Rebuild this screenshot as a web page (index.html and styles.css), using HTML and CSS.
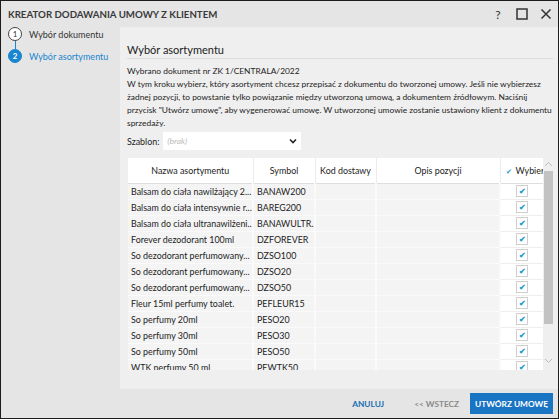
FILE: index.html
```html
<!DOCTYPE html>
<html lang="pl">
<head>
    <meta charset="UTF-8">
    <title>Kreator dodawania umowy z klientem</title>
    <link rel="stylesheet" href="styles.css">
</head>
<body>
<div class="window">
    <div class="titlebar">
        <span class="title">KREATOR DODAWANIA UMOWY Z KLIENTEM</span>
        <div class="win-buttons">
            <span class="win-btn">?</span>
            <span class="win-btn">
                <svg width="12" height="12" viewBox="0 0 12 12"><rect x="1" y="1" width="10" height="10" fill="none" stroke="#333" stroke-width="1.5"/></svg>
            </span>
            <span class="win-btn">
                <svg width="12" height="12" viewBox="0 0 12 12"><path d="M1.5 1.5 L10.5 10.5 M10.5 1.5 L1.5 10.5" stroke="#333" stroke-width="1.5"/></svg>
            </span>
        </div>
    </div>

    <div class="main">
        <div class="sidebar">
            <div class="step">
                <span class="step-num">1</span>
                <span class="step-label">Wybór dokumentu</span>
            </div>
            <div class="step-line"></div>
            <div class="step active">
                <span class="step-num">2</span>
                <span class="step-label">Wybór asortymentu</span>
            </div>
        </div>

        <div class="content">
            <h1 class="heading">Wybór asortymentu</h1>
            <p class="info">Wybrano dokument nr ZK 1/CENTRALA/2022<br>W tym kroku wybierz, który asortyment chcesz przepisać z dokumentu do tworzonej umowy. Jeśli nie wybierzesz żadnej pozycji, to powstanie tylko powiązanie między utworzoną umową, a dokumentem źródłowym. Naciśnij przycisk "Utwórz umowę", aby wygenerować umowę. W utworzonej umowie zostanie ustawiony klient z dokumentu sprzedaży.</p>

            <div class="template-row">
                <span class="template-label">Szablon:</span>
                <div class="select">
                    <span class="placeholder">(brak)</span>
                    <svg width="8" height="6" viewBox="0 0 8 6"><path d="M1 1.5 L4 4.5 L7 1.5" fill="none" stroke="#222" stroke-width="1.6"/></svg>
                </div>
            </div>

            <div class="grid-wrap">
                <div class="grid">
                    <table>
                        <colgroup>
                            <col style="width:125px">
                            <col style="width:62px">
                            <col style="width:61px">
                            <col style="width:124px">
                            <col style="width:43px">
                        </colgroup>
                        <thead>
                            <tr>
                                <th>Nazwa asortymentu</th>
                                <th>Symbol</th>
                                <th>Kod dostawy</th>
                                <th>Opis pozycji</th>
                                <th class="pick-head"><span class="mini-check">&#10004;</span>Wybier</th>
                            </tr>
                        </thead>
                        <tbody id="rows"></tbody>
                    </table>
                </div>
                <div class="scrollbar">
                    <svg class="arrow" width="9" height="6" viewBox="0 0 9 6"><path d="M1 5 L4.5 1.5 L8 5" fill="none" stroke="#bbb" stroke-width="1"/></svg>
                    <div class="thumb"></div>
                    <svg class="arrow down" width="9" height="6" viewBox="0 0 9 6"><path d="M1 1 L4.5 4.5 L8 1" fill="none" stroke="#bbb" stroke-width="1"/></svg>
                </div>
            </div>
        </div>
    </div>

    <div class="footer">
        <span class="btn link">ANULUJ</span>
        <span class="btn muted">&lt;&lt; WSTECZ</span>
        <span class="btn primary">UTWÓRZ UMOWĘ</span>
    </div>
</div>

<script>
    const items = [
        ["Balsam do ciała nawilżający 2...", "BANAW200"],
        ["Balsam do ciała intensywnie r...", "BAREG200"],
        ["Balsam do ciała ultranawilżeni...", "BANAWULTR..."],
        ["Forever dezodorant 100ml", "DZFOREVER"],
        ["So dezodorant perfumowany...", "DZSO100"],
        ["So dezodorant perfumowany...", "DZSO20"],
        ["So dezodorant perfumowany...", "DZSO50"],
        ["Fleur 15ml perfumy toalet.", "PEFLEUR15"],
        ["So perfumy 20ml", "PESO20"],
        ["So perfumy 30ml", "PESO30"],
        ["So perfumy 50ml", "PESO50"],
        ["WTK perfumy 50 ml", "PEWTK50"]
    ];

    const tbody = document.getElementById("rows");
    items.forEach(item => {
        let tr = document.createElement("tr");
        tr.innerHTML = `<td>${item[0]}</td><td>${item[1]}</td><td></td><td></td>
            <td class="pick"><span class="checkbox">&#10004;</span></td>`;
        tbody.appendChild(tr);
    });
</script>
</body>
</html>
```

FILE: styles.css
```css
* { box-sizing: border-box; }
html, body { margin: 0; padding: 0; }
body { font-family: Lato, "Noto Sans", sans-serif; color: #222; background: #fff; }

.window { width: 559px; height: 419px; border: 1px solid #1c1c1c; display: flex; flex-direction: column; background: #e5e5e5; overflow: hidden; }

.titlebar { height: 26px; flex-shrink: 0; display: flex; align-items: center; justify-content: space-between; padding: 0 0 0 7px; }
.title { font-size: 9.7px; font-weight: bold; color: #3a3a3a; }
.win-buttons { display: flex; align-items: center; }
.win-btn { width: 24px; height: 26px; display: flex; align-items: center; justify-content: center; font-size: 12px; color: #333; }

.main { flex: 1; display: flex; min-height: 0; }

.sidebar { width: 119px; flex-shrink: 0; padding: 0 0 0 7px; white-space: nowrap; }
.step { display: flex; align-items: center; height: 14px; }
.step-num { width: 14px; height: 14px; border: 1px solid #444; border-radius: 50%; font-size: 8px; display: flex; align-items: center; justify-content: center; background: #fff; color: #333; flex-shrink: 0; }
.step-label { font-size: 9px; margin-left: 7px; color: #333; }
.step-line { width: 1px; height: 8px; background: #1a86d0; margin-left: 7px; }
.step.active .step-num { background: #1a86d0; border-color: #1a86d0; color: #fff; font-weight: bold; }
.step.active .step-label { color: #1a86d0; }

.content { flex: 1; background: #efefef; padding: 16px 5px 0 7px; display: flex; flex-direction: column; min-height: 0; }
.heading { font-size: 11px; line-height: 14px; font-weight: normal; margin: 0; padding-bottom: 1px; border-bottom: 1px solid #dcdcdc; color: #222; }
.info { font-size: 8.4px; line-height: 13px; margin: 6px -3px 0 0; color: #222; }

.template-row { display: flex; align-items: center; margin-top: 2px; }
.template-label { font-size: 8.9px; margin-right: 4px; }
.select { width: 138px; height: 18px; background: #fff; display: flex; align-items: center; justify-content: space-between; padding: 0 4px 0 4px; }
.placeholder { font-size: 8.5px; font-style: italic; color: #bbb; }

.grid-wrap { display: flex; margin: 8px 0 0 1px; height: 212px; flex-shrink: 0; overflow: hidden; }
.grid { width: 415px; overflow: hidden; }
table { border-collapse: collapse; table-layout: fixed; width: 415px; font-size: 8.9px; }
th { height: 25px; background: #fff; font-weight: normal; color: #222; border-right: 1px solid #ececec; border-bottom: 1px solid #dedede; white-space: nowrap; overflow: hidden; }
td { height: 16px; background: #f4f4f4; border-right: 2px solid #fafafa; border-bottom: 1px solid #fafafa; padding: 0 3px; white-space: nowrap; overflow: hidden; }
.pick-head { text-align: left; padding-left: 5px; border-right: none; }
.mini-check { font-size: 7px; color: #1a9ad6; margin-right: 4px; }
td.pick { background: #fff; text-align: center; border-right: none; border-bottom: 1px solid #eee; }
.checkbox { display: inline-block; width: 12px; height: 12px; border: 1px solid #cfcfcf; background: #fff; color: #1a9ad6; font-size: 8px; font-weight: bold; line-height: 10px; text-align: center; vertical-align: middle; }

.scrollbar { width: 10px; display: flex; flex-direction: column; align-items: center; }
.scrollbar .arrow { margin-top: 3px; }
.thumb { width: 9px; height: 153px; background: #c2c2c2; margin-top: 4px; }
.scrollbar .arrow.down { margin-top: auto; margin-bottom: 6px; }

.footer { height: 29px; flex-shrink: 0; display: flex; align-items: center; justify-content: flex-end; padding-right: 5px; }
.btn { font-size: 8.3px; font-weight: bold; }
.btn.link { color: #1a6fb0; margin-right: 30px; }
.btn.muted { color: #8a8a8a; margin-right: 11px; }
.btn.primary { background: #1a74c4; color: #fff; height: 21px; padding: 0 5px; display: flex; align-items: center; }
```
